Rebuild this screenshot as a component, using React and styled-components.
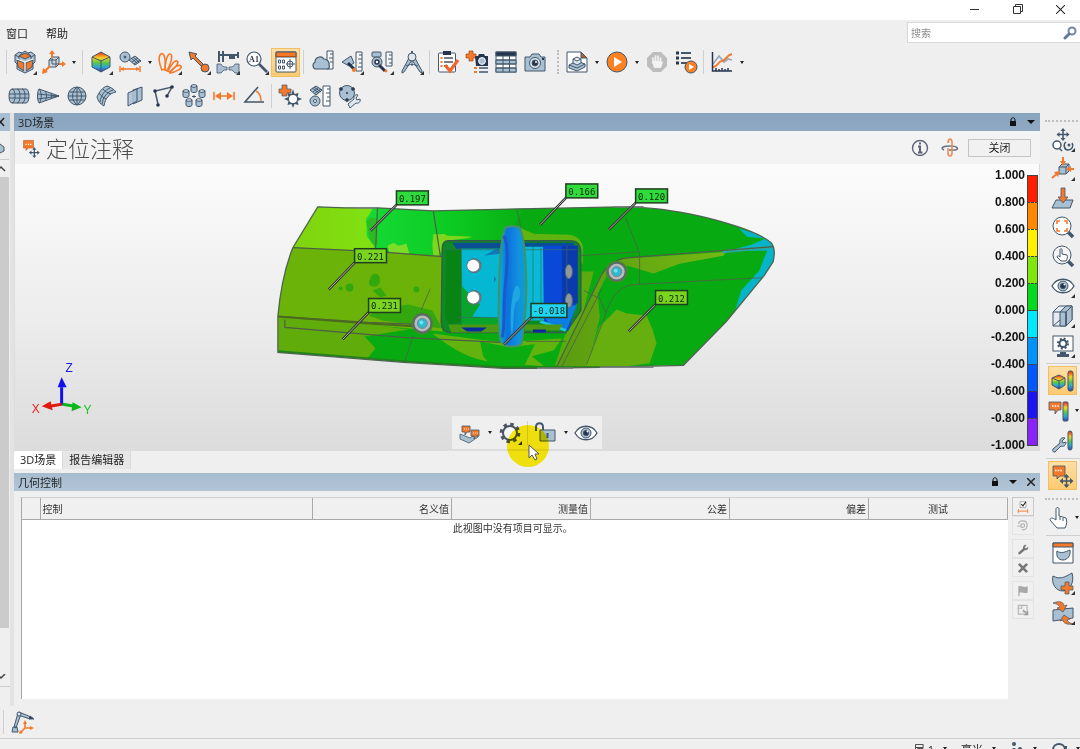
import React from 'react';
import styled, { createGlobalStyle, css } from 'styled-components';

const GlobalStyle = createGlobalStyle`
  * {
    box-sizing: border-box;
  }

  body {
    margin: 0;
    overflow: hidden;
    background: #efefef;
    color: #222;
    font-family: 'Open Sans', 'Noto Sans CJK SC', sans-serif;
    font-size: 11px;
  }

  button,
  input {
    font-family: inherit;
    font-size: inherit;
    color: inherit;
  }

  svg {
    display: block;
    flex: none;
  }
`;

const STEEL = '#a9bfd2';
const DARK = '#43576b';
const NAVY = '#26354f';
const ORANGE = '#f5792a';

/* ---------- icons, all on a 24 x 24 grid ---------- */

const Hue = ({ id }) => (
  <linearGradient id={id} x1="0" y1="0" x2="0" y2="1">
    <stop offset="0.05" stopColor="#f0401c" />
    <stop offset="0.3" stopColor="#f5d327" />
    <stop offset="0.55" stopColor="#55c552" />
    <stop offset="0.75" stopColor="#2fa8cf" />
    <stop offset="1" stopColor="#3440b8" />
  </linearGradient>
);

const icons = {
  cubes: (
    <g stroke={DARK} strokeLinejoin="round">
      <path d="M2 5l4-3 3 1 3-2 3 2 3-1 4 3v7l-2 2v5l-8 4-8-4v-5l-2-2z" fill={STEEL} />
      <path d="M2 5l4 2v5M22 5l-4 2v5M9 3l-3 4M15 3l3 4" fill="none" />
      <path d="M6 6l6-3 6 3-6 3z" fill={ORANGE} />
      <path d="M4 10l7 3v8l-6-4z M20 10l-7 3v8l6-4z" fill={ORANGE} />
      <path d="M4 9l8 3 8-3 M12 12v9" fill="none" stroke="#fff" />
    </g>
  ),
  axes: (
    <g fill="none" stroke={DARK}>
      <path d="M7 10h7v7H7z M10 7h7v7h-7z M7 10l3-3 M14 10l3-3 M14 17l3-3" fill={STEEL} fillOpacity="0.5" />
      <path d="M10 8V3 M17 14h5 M8 16l-5 5" stroke={ORANGE} strokeWidth="2" />
      <path d="M10 0l3 4H7z M24 14l-4 3v-6z M0 24l1-6 5 4z" fill={ORANGE} stroke="none" />
    </g>
  ),
  hueCube: (
    <g stroke={DARK} strokeLinejoin="round">
      <defs><Hue id="hueCube" /></defs>
      <path d="M12 2l9 5v10l-9 5-9-5V7z" fill="url(#hueCube)" />
      <path d="M3 7l9 4 9-4 M12 11v11" fill="none" />
    </g>
  ),
  measure: (
    <g stroke={DARK}>
      <circle cx="7" cy="7" r="5" fill={STEEL} />
      <circle cx="7" cy="7" r="1" fill={DARK} />
      <path d="M11 10l6-4 6 5-6 4z M13 8l6 5 M15 7l6 5 M14 12l6-4 M16 14l6-4" fill={STEEL} />
      <path d="M3 19h18 M2 16v6 M22 16v6" stroke={ORANGE} strokeWidth="1.4" />
      <path d="M2 19l4-2v4z M22 19l-4-2v4z" fill={ORANGE} stroke="none" />
    </g>
  ),
  petals: (
    <g fill="none" stroke={ORANGE} strokeWidth="1.6">
      <path d="M4 20C1 14 0 6 3 4s5 5 4 15z" />
      <path d="M7 20C7 13 9 4 12 4s2 8-3 17z" />
      <path d="M10 21c3-6 6-11 9-10s-2 7-7 11z" />
      <path d="M12 22c4-5 9-8 11-6s-5 6-11 7z" />
    </g>
  ),
  pointer: (
    <g>
      <path d="M2 2l2 8 2-2 10 10 2-2L8 6l2-2z" fill={ORANGE} stroke={DARK} />
      <circle cx="18" cy="18" r="4" fill={ORANGE} stroke={DARK} />
    </g>
  ),
  caliper: (
    <g>
      <path d="M2 1h2v11H2z M6 1h2v11H6z M2 4h20v2H2z M13 4h6v5h-6z M21 2h2v6h-2z" fill={DARK} />
      <path d="M1 14h4c1 3 4 3 6 3v3H8l-3 3H1z M23 14h-4c-1 3-4 3-6 3v3h3l3 3h4z" fill={STEEL} stroke={DARK} strokeWidth="0.8" />
    </g>
  ),
  zoomText: (
    <g>
      <circle cx="9" cy="9" r="7" fill="#fff" stroke={DARK} strokeWidth="1.2" />
      <text x="9" y="12" fontSize="8" fontWeight="bold" textAnchor="middle" fontFamily="Liberation Serif, serif" fill={NAVY}>A1</text>
      <path d="M14 14l8 8" stroke={DARK} strokeWidth="2.6" />
    </g>
  ),
  window: (
    <g>
      <rect x="2" y="2" width="20" height="20" rx="1" fill="#fff" stroke={DARK} />
      <path d="M2 2h20v5H2z" fill={ORANGE} stroke={DARK} />
      <path d="M2 6.5h20" stroke="#b84e12" />
      <g fill="none" stroke={DARK}>
        <path d="M4.5 10h2v3h-2z M8.5 10h2v3h-2z M4.5 16h2v3h-2z M8.5 16h2v3h-2z" />
        <circle cx="16" cy="14" r="3" />
        <path d="M16 9v10 M12 14h9" />
      </g>
    </g>
  ),
  cloud: (
    <g stroke={DARK}>
      <path d="M17 1h6v18h-6z" fill="#f7f7f7" />
      <path d="M23 4h-3 M23 8h-4 M23 12h-3" />
      <path d="M5 19a4 4 0 0 1 0-7 5 5 0 0 1 9-3 5 5 0 0 1 5 6c1 2 0 4-2 4z" fill={STEEL} strokeWidth="1.2" />
    </g>
  ),
  probe: (
    <g stroke={DARK}>
      <path d="M16 2h6v19h-6z" fill="#f7f7f7" />
      <path d="M22 5h-3 M22 9h-4 M22 13h-3 M22 17h-4" />
      <path d="M2 12l9-6 3 7-5 3z" fill={STEEL} />
      <path d="M8 13l6 6" stroke={NAVY} strokeWidth="3" />
      <circle cx="14" cy="20" r="2" fill={ORANGE} stroke="none" />
    </g>
  ),
  scanner: (
    <g stroke={DARK}>
      <path d="M16 2h6v14h-6z" fill="#f7f7f7" />
      <path d="M22 5h-3 M22 9h-4 M22 13h-3" />
      <rect x="2" y="2" width="9" height="5" rx="1" fill={STEEL} />
      <circle cx="7" cy="12" r="5" fill={STEEL} />
      <circle cx="7" cy="12" r="2" fill="#fff" stroke={NAVY} strokeWidth="1.5" />
      <path d="M9 15l6 6" stroke={NAVY} strokeWidth="3" />
      <circle cx="16" cy="21" r="1.4" fill={ORANGE} stroke="none" />
    </g>
  ),
  compass: (
    <g stroke={DARK} fill={STEEL}>
      <path d="M12 1v4" strokeWidth="2" />
      <path d="M9 8L2 21v2l2-1 8-12z M15 8l7 13v2l-2-1-8-12z" />
      <circle cx="12" cy="7" r="4" fill="#dfe6ec" />
      <path d="M6 16c4-2 8-2 12 0 M12 11v5" fill="none" />
    </g>
  ),
  clipboard: (
    <g>
      <rect x="2.5" y="3" width="17" height="19" rx="1" fill="#fff" stroke={DARK} />
      <path d="M7 1h8v4H7z" fill={NAVY} />
      <path d="M8 8h9 M8 12h9 M8 16h4" stroke={DARK} strokeWidth="1.3" />
      <path d="M4.5 8h2 M4.5 12h2 M4.5 16h2" stroke={ORANGE} strokeWidth="2" />
      <path d="M9 15l5 6 8-11" fill="none" stroke="#f0642c" strokeWidth="3.2" />
    </g>
  ),
  addShot: (
    <g>
      <path d="M4 1h4v3h3v4H8v3H4V8H1V4h3z" fill={ORANGE} stroke="#a14a17" strokeWidth="0.7" />
      <path d="M10 6h3l1-2h5l1 2h3v10H11z" fill={NAVY} />
      <circle cx="17" cy="11" r="3.4" fill={STEEL} stroke="#fff" />
      <path d="M9 18h3 M9 22h3" stroke={ORANGE} strokeWidth="2" />
      <path d="M14 18h9 M14 22h9" stroke={DARK} strokeWidth="1.4" />
    </g>
  ),
  grid: (
    <g stroke={DARK}>
      <rect x="2" y="2" width="20" height="20" fill="#fff" />
      <path d="M2 10h20v4H2z M2 18h20v4H2z" fill={STEEL} />
      <path d="M2 2h20v4H2z" fill={NAVY} />
      <path d="M9 6v16 M15.5 6v16 M2 10h20 M2 14h20 M2 18h20" fill="none" />
    </g>
  ),
  camera: (
    <g stroke={DARK}>
      <path d="M2 7h5l2-3h7l2 3h4v14H2z" fill={STEEL} strokeLinejoin="round" />
      <circle cx="12" cy="13" r="5.5" fill="#dfe7ee" />
      <circle cx="12" cy="13" r="3" fill={NAVY} />
      <circle cx="13" cy="12" r="1" fill="#fff" stroke="none" />
      <path d="M19 9h2" strokeWidth="2" stroke={NAVY} />
    </g>
  ),
  docPart: (
    <g stroke={DARK}>
      <path d="M2 2h14l6 6v14H2z" fill="#fff" />
      <path d="M16 2v6h6z" fill="#b55a2b" />
      <path d="M4 15l8-4 8 3v3l-8 4-8-3z" fill={STEEL} />
      <path d="M8 9l4-2 4 2v4l-4 2-4-2z M8 9l4 2 4-2" fill="#dfe7ee" />
      <path d="M4 15l8 3 8-4" fill="none" />
    </g>
  ),
  play: (
    <g>
      <circle cx="12" cy="12" r="10" fill="#fb8122" stroke={DARK} />
      <path d="M9 7l8 5-8 5z" fill="#fff" />
    </g>
  ),
  stop: (
    <g>
      <path d="M8 2h8l6 6v8l-6 6H8l-6-6V8z" fill="#bdbdbd" />
      <path d="M8 13V8 M10.5 11V6 M13 11V6 M15.5 12V8" stroke="#f2f2f2" strokeWidth="1.7" strokeLinecap="round" />
      <path d="M7 11h9l2 1-2 6H9z" fill="#f2f2f2" />
    </g>
  ),
  runList: (
    <g>
      <path d="M2 3h3 M2 8h3 M2 13h3" stroke={NAVY} strokeWidth="3" />
      <path d="M7 3h10 M7 8h10 M7 13h6" stroke={DARK} strokeWidth="2" />
      <circle cx="17" cy="17" r="6" fill="#fb8122" stroke={DARK} />
      <path d="M15 14l5 3-5 3z" fill="#fff" />
    </g>
  ),
  chart: (
    <g fill="none">
      <path d="M3 14l6-8 5 6 4-3 4 1" stroke="#94a9bb" strokeWidth="1.7" />
      <path d="M3 17c5 0 5-6 9-6s4-6 10-7" stroke={ORANGE} strokeWidth="2" />
      <path d="M2.5 2v19H22 M6 21v-3 M9 21v-2 M12 21v-3 M15 21v-2 M18 21v-3" stroke={NAVY} strokeWidth="1.5" />
    </g>
  ),
  cylinder: (
    <g stroke={DARK} fill={STEEL}>
      <path d="M5 5h14c4 0 4 14 0 14H5C1 19 1 5 5 5z" />
      <path d="M5 5c4 0 4 14 0 14 M10 5c4 0 4 14 0 14 M15 5c4 0 4 14 0 14 M2 10h20 M2 14h20" fill="none" />
    </g>
  ),
  cone: (
    <g stroke={DARK} fill={STEEL}>
      <path d="M3 5l20 7-20 7c-2-3-2-11 0-14z" />
      <path d="M3 5c3 3 3 11 0 14 M9 7c2 3 2 7 0 10 M15 9c1 2 1 4 0 6 M2 10l21 2 M2 15l21-3" fill="none" />
    </g>
  ),
  sphere: (
    <g stroke={DARK} fill="none">
      <circle cx="12" cy="12" r="9" fill={STEEL} />
      <path d="M12 3v18 M12 3c-6 5-6 13 0 18 M12 3c6 5 6 13 0 18 M4 8h16 M3 12h18 M4 16h16" />
    </g>
  ),
  surface: (
    <g stroke={DARK} fill="none">
      <path d="M3 13C5 8 9 3 13 2c3 1 7 3 9 6-6 1-11 6-12 14-4-2-6-5-7-9z" fill={STEEL} />
      <path d="M5 9c2 3 5 5 7 6 M9 5c2 3 5 4 8 5 M6 18c1-7 5-12 10-14 M8 20c1-7 5-12 11-14" />
    </g>
  ),
  planes: (
    <g stroke={DARK} fill={STEEL}>
      <path d="M10 6l9-3v13l-9 4z" />
      <path d="M5 9l9-4v12l-9 5z" fillOpacity="0.85" />
    </g>
  ),
  polyline: (
    <g>
      <path d="M6 20L3 7l17-4-5 9" fill="none" stroke={DARK} strokeWidth="1.5" />
      <g fill={NAVY}>
        <circle cx="6" cy="21" r="1.8" /><circle cx="3" cy="7" r="1.8" />
        <circle cx="20" cy="3" r="1.8" /><circle cx="15" cy="12" r="1.8" />
      </g>
    </g>
  ),
  cylinders: (
    <g stroke={DARK} fill={STEEL}>
      {[[9, 1], [1, 6], [17, 6], [4, 15], [14, 15]].map(([x, y]) => (
        <g key={x}>
          <path d={`M${x} ${y + 1}h6v5c0 2-6 2-6 0z`} />
          <ellipse cx={x + 3} cy={y + 1} rx="3" ry="1.3" fill="#dfe7ee" />
        </g>
      ))}
      <path d="M12 11v3 M10 12.5h4" />
    </g>
  ),
  distance: (
    <g>
      <path d="M4 12h16 M2 8v8 M22 8v8" stroke={ORANGE} strokeWidth="1.6" />
      <path d="M3 12l6-4v8z M21 12l-6-4v8z" fill={ORANGE} />
    </g>
  ),
  angle: (
    <g fill="none">
      <path d="M16 3L3 18h19" stroke={DARK} strokeWidth="1.6" />
      <path d="M14 7c4 2 5 6 5 10" stroke={ORANGE} strokeWidth="1.5" />
    </g>
  ),
  addPoint: (
    <g>
      <path d="M15 5l1.5 5 4-1-1 4 4.500 2-4.500 2 1 4-4-1-1.500 4-1.500-4-4 1 1-4-4.500-2 4.500-2-1-4 4 1z" fill={DARK} />
      <circle cx="15" cy="15" r="4" fill="#fff" />
      <path d="M4 1h5v4h4v4H9v3H4V9H1V5h3z" fill={ORANGE} stroke={DARK} strokeWidth="0.7" />
    </g>
  ),
  meshRuler: (
    <g stroke={DARK} fill={STEEL}>
      <path d="M15 2h7v20h-7z" fill="#fff" />
      <path d="M22 5h-3 M22 9h-4 M22 13h-3 M22 17h-4" />
      <path d="M2 6l6-4 6 4-6 5z M4 4l7 5 M6 3l7 5 M5 8l6-5 M6 10l7-5" />
      <circle cx="7" cy="17" r="5" />
      <circle cx="7" cy="17" r="1.5" fill="#fff" />
    </g>
  ),
  wrenchCircle: (
    <g stroke={DARK}>
      <circle cx="9" cy="9" r="7.5" fill={STEEL} />
      <g fill={NAVY}><circle cx="3" cy="5" r="1.5" /><circle cx="15" cy="5" r="1.5" /><circle cx="9" cy="16" r="1.5" /><circle cx="9" cy="9" r="0.8" /></g>
      <path d="M10 20l6-5c-1-3 2-5 4-4l-2 3 1 2 3-1c1 3-2 5-4 4l-6 5z" fill="#dfe7ee" />
    </g>
  ),
  note: (
    <g>
      <path d="M3 3h12v9H9l-3 3v-3H3z" fill={ORANGE} stroke="#b35c2b" strokeWidth="0.7" />
      <path d="M5.5 7.5h7" stroke="#fff" strokeWidth="1.5" strokeDasharray="1.5 1.2" />
      <path d="M16 13v9 M11 17.5h10" stroke={DARK} strokeWidth="1.5" />
      <path d="M16 11l2.5 3h-5z M16 24l2.5-3h-5z M9.5 17.5l3-2.5v5z M22.5 17.5l-3-2.5v5z" fill={DARK} />
    </g>
  ),
  info: (
    <g fill="none" stroke="#5d6577" strokeWidth="1.4">
      <circle cx="12" cy="12" r="7.5" />
      <path d="M10 10.5h2v6 M10 16.5h4.5 M11 7.5h2" strokeWidth="2" />
    </g>
  ),
  orbit: (
    <g fill="none" strokeWidth="1.6">
      <path d="M6 14c-4-2-1-4 6-4s10 3 5 4h-6" stroke="#6b7484" />
      <path d="M10 7c0-5 4-5 4-1v11c0 4-4 4-4 0v-5" stroke="#f08a58" />
    </g>
  ),
  viewModes: (
    <g fill="none" stroke={DARK} strokeWidth="1.5">
      <path d="M12 2v9 M7 6.5h10" />
      <path d="M12 0l2.5 3h-5z M12 13l2.5-3h-5z M5.5 6.5l3-2.5v5z M18.5 6.5l-3-2.5v5z" fill={DARK} stroke="none" />
      <circle cx="6" cy="17" r="4" fill="#fff" />
      <path d="M8 20l3 3 M15 14c-3 2-2 8 2 8s6-4 4-7" />
      <circle cx="18" cy="17" r="1.5" fill={DARK} stroke="none" />
    </g>
  ),
  alignBox: (
    <g stroke={DARK}>
      <path d="M8 10l3-3h7v7l-3 3H8z M8 10h7v7 M15 10l3-3" fill={STEEL} />
      <path d="M12 0v6 M23 12h-5 M1 21l6-5" stroke={ORANGE} strokeWidth="2" />
      <path d="M12 9L9 4h6z M15 12l5-3v6z M9 14l-2 6-4-5z" fill={ORANGE} stroke="none" />
    </g>
  ),
  project: (
    <g stroke={DARK}>
      <path d="M5 14h17l-3 8H1z" fill={STEEL} />
      <path d="M10 2h4v9h3l-5 6-5-6h3z" fill={ORANGE} strokeWidth="0.8" />
    </g>
  ),
  zoomFit: (
    <g fill="none">
      <path d="M17 17l5 5" stroke={DARK} strokeWidth="3.5" />
      <circle cx="11" cy="11" r="9" fill="#fff" stroke={DARK} />
      <path d="M6 9V6h3 M13 6h3v3 M16 13v3h-3 M9 16H6v-3" stroke={ORANGE} strokeWidth="1.6" />
    </g>
  ),
  zoomHand: (
    <g>
      <path d="M17 17l5 5" stroke={DARK} strokeWidth="3.5" />
      <circle cx="11" cy="11" r="9" fill="#f4f4f4" stroke={DARK} />
      <path d="M9 13V5.5c0-1 2-1 2 0V10l5 1c1 2 0 4-1 6h-5l-4-4c0-1 1-2 3 0z" fill="#fff" stroke={DARK} />
    </g>
  ),
  eye: (
    <g stroke={DARK}>
      <path d="M1 12c5-9 17-9 22 0-5 9-17 9-22 0z" fill="#fff" strokeWidth="1.3" />
      <circle cx="12" cy="12" r="5" fill={STEEL} />
      <circle cx="12" cy="12" r="2.6" fill={NAVY} />
      <circle cx="13.5" cy="10.5" r="1" fill="#fff" stroke="none" />
    </g>
  ),
  wireBox: (
    <g stroke={DARK}>
      <path d="M2 8l6-6h13v14l-6 6H2z" fill="#e4eaf0" />
      <path d="M15 8l6-6v14l-6 6z M9 8l6-6h6l-6 6v14H9z" fill={STEEL} />
      <path d="M2 8h13v14 M2 22l7-6" fill="none" />
    </g>
  ),
  monitor: (
    <g>
      <rect x="2" y="2" width="20" height="15" fill="#fff" stroke={DARK} />
      <path d="M9 18h6v2h3v3H6v-3h3z" fill={DARK} />
      <circle cx="12" cy="9.5" r="3.5" fill="none" stroke={DARK} strokeWidth="2" />
      <circle cx="12" cy="9.5" r="5" fill="none" stroke={DARK} strokeWidth="2" strokeDasharray="2 1.93" />
    </g>
  ),
  cubeBar: (
    <g stroke={DARK}>
      <defs><Hue id="cubeBar" /></defs>
      <path d="M8 6l6 3v7l-6 4-7-4V9z" fill="url(#cubeBar)" />
      <path d="M1 9l7 3 6-3 M8 12v8" fill="none" />
      <rect x="17" y="2" width="5" height="20" rx="2" fill="url(#cubeBar)" />
    </g>
  ),
  noteBar: (
    <g stroke={DARK}>
      <defs><Hue id="noteBar" /></defs>
      <path d="M-2 3h12v8H7l-3 4v-4h-6z" fill={ORANGE} strokeWidth="0.8" />
      <path d="M1 7h7" stroke="#fff" strokeWidth="1.5" strokeDasharray="1.5 1.2" />
      <rect x="12" y="3" width="5" height="19" rx="1" fill="url(#noteBar)" />
    </g>
  ),
  wrenchBar: (
    <g stroke={DARK}>
      <defs><Hue id="wrenchBar" /></defs>
      <path d="M2 20l7-6c-1-4 2-6 5-5l-3 3 1 2 3-1c0 4-3 5-5 4l-6 6c-2 0-3-1-2-3z" fill={STEEL} />
      <rect x="17" y="2" width="4" height="19" rx="2" fill="url(#wrenchBar)" />
    </g>
  ),
  noteMove: (
    <g>
      <path d="M2 2h12v10H9l-3 3v-3H2z" fill={ORANGE} stroke={DARK} strokeWidth="0.8" />
      <path d="M4 6.5h8" stroke="#fff" strokeWidth="1.5" strokeDasharray="1.5 1.2" />
      <path d="M15.5 13v8 M11 17h9" stroke={DARK} strokeWidth="1.5" />
      <path d="M15.5 10l3 3.5h-6z M15.5 24l3-3.5h-6z M8.5 17l3.5-3v6z M22.5 17l-3.5-3v6z" fill={DARK} />
    </g>
  ),
  hand: (
    <path d="M7 14V3c0-2 3-2 3 0v7l7 2c1 2 1 7-1 10H8l-7-8c0-2 2-3 6 0z M11 11v3 M14 12v3" transform="translate(-2)" fill="#fff" stroke={DARK} />
  ),
  windowShape: (
    <g stroke={DARK}>
      <path d="M2 2h20v20H2z" fill="#fff" />
      <path d="M2 2h20v4H2z" fill={ORANGE} />
      <path d="M6 10c4 3 8 1 13-1 1 6-3 10-7 10-5 0-7-4-6-9z" fill={STEEL} />
    </g>
  ),
  addShape: (
    <g stroke={DARK}>
      <path d="M2 5c7 4 12 1 19-3 3 10-3 18-9 18C5 20 0 13 2 5z" fill={STEEL} />
      <path d="M14 11h4v4h4v4h-4v4h-4v-4h-4v-4h4z" fill={ORANGE} strokeWidth="0.7" />
    </g>
  ),
  flip: (
    <g stroke={DARK}>
      <path d="M2 9l20-2v10L2 20z" fill={STEEL} />
      <path d="M2 2c8-3 11 0 11 3l3-1-4 7-6-4 3-1c-1-2-3-3-7-4z M22 23c-6 1-10-1-10-4l-3 1 4-6 6 4-3 1c1 2 3 3 6 4z" fill={ORANGE} strokeWidth="0.7" />
    </g>
  ),
  noteTray: (
    <g stroke={DARK} strokeWidth="0.8">
      <path d="M2 13l10 4 8-5v4l-9 6-9-4z" fill={STEEL} />
      <path d="M4 5h8v6H9l-2 3v-3H4z M13 9h8v6h-3l-2 3v-3h-3z" fill={ORANGE} />
      <path d="M6 8h5 M15 12h5" stroke="#fff" strokeDasharray="1 1" />
    </g>
  ),
  gear: (
    <g fill="none" stroke="#4a5665">
      <circle cx="12" cy="12" r="7" strokeWidth="2" fill="#fff" fillOpacity="0.5" />
      <circle cx="12" cy="12" r="8.8" strokeWidth="3" strokeDasharray="3.456 3.456" />
    </g>
  ),
  unlock: (
    <g stroke={DARK}>
      <path d="M2 10V6c0-5 7-5 7 0v4" fill="none" strokeWidth="2" />
      <path d="M6 9h15v11H6z" fill={STEEL} />
      <path d="M13.5 12v5" strokeWidth="2" />
    </g>
  ),
  robot: (
    <g stroke={DARK}>
      <path d="M2 22l1-5h4l1 5z M4 17L8 3l3 1-5 14z" fill={STEEL} />
      <path d="M9 2l12 5-1 2-12-4z" fill={STEEL} />
      <circle cx="9" cy="4" r="2" fill="#dfe7ee" />
      <path d="M20 6l4 3h-5z" fill={NAVY} />
      <path d="M15 18v-6 M15 18h6 M15 18l-5 5" stroke={ORANGE} strokeWidth="1.6" />
      <path d="M15 10l2 4h-4z M24 18l-4 2v-4z M9 24l1-4 3 3z" fill={ORANGE} stroke="none" />
    </g>
  ),
  checkRange: (
    <g fill="none">
      <path d="M7 3h10v10H7z" fill="#fff" stroke="#777" />
      <path d="M9 7l3 3 5-7" stroke="#222" strokeWidth="2" />
      <path d="M4 19h16 M4 16v6 M20 16v6" stroke={ORANGE} strokeWidth="1.6" />
    </g>
  ),
  target: (
    <g fill="none" stroke="#b3b3b3" strokeWidth="2">
      <path d="M4 8c3-7 14-6 15 1s-4 11-9 9 M8 11c1-4 7-3 7 0s-5 5-7 2 M2 12h8" />
    </g>
  ),
  wrench: (
    <path d="M4 18l8-7c-1-4 3-7 6-6l-3 4 2 2 4-3c1 4-3 7-6 6l-8 7c-2 1-4-1-3-3z" fill="#777" />
  ),
  cross: (
    <path d="M5 5l14 14 M19 5L5 19" stroke="#777" strokeWidth="4.5" />
  ),
  flag: (
    <path d="M4 4c6-2 9 3 16 0v11c-7 2-9-2-14 0v6H4z" fill="#a8a8a8" />
  ),
  export: (
    <g fill="none" stroke="#b5b5b5" strokeWidth="2">
      <path d="M4 4h15v15H4z M4 9h6V4 M11 15h8" />
      <path d="M12 12l8 8 M20 14v6h-6" stroke="#999" />
    </g>
  ),
};

const Icon = ({ name, size = 24 }) => (
  <svg width={size} height={size} viewBox="0 0 24 24" overflow="visible" aria-hidden="true">
    {icons[name]}
  </svg>
);

/* ---------- shell ---------- */

const Shell = styled.div`
  display: flex;
  flex-direction: column;
  height: 100vh;
`;

const TitleBar = styled.header`
  display: flex;
  justify-content: flex-end;
  height: 20px;
  background: #fff;
`;

const WindowButton = styled.button`
  display: grid;
  place-items: center;
  width: 43px;
  padding: 0 0 2px 4px;
  border: 0;
  background: none;
`;

const MenuBar = styled.nav`
  display: flex;
  align-items: center;
  height: 25px;
  padding-left: 6px;
  gap: 18px;
`;

const MenuButton = styled.button`
  padding: 0;
  border: 0;
  background: none;
`;

const Search = styled.label`
  display: flex;
  align-items: center;
  width: 173px;
  height: 21px;
  margin-left: auto;
  padding: 0 3px;
  border: 1px solid #d9d9d9;
  border-right: 0;
  background: #fff;
`;

const SearchInput = styled.input`
  flex: 1;
  min-width: 0;
  padding: 0;
  border: 0;
  outline: 0;
  background: none;
  font-size: 10px;

  &::placeholder {
    color: #8c8c8c;
  }
`;

const ToolRow = styled.div`
  display: flex;
  align-items: center;
  height: 34px;
  padding-left: ${(p) => p.$indent}px;
`;

const Group = styled.div`
  display: flex;
  flex-direction: ${(p) => (p.$vertical ? 'column' : 'row')};
  gap: ${(p) => (p.$loose ? 1 : 0)}px;
`;

const Tool = styled.button`
  position: relative;
  display: grid;
  place-items: center;
  width: 29px;
  height: 29px;
  padding: 0;
  border: 1px solid transparent;
  background: none;

  ${(p) =>
    p.$active &&
    css`
      border-color: #f3bd62;
      background: linear-gradient(#fde0a6, #fdca70);
    `}

  ${(p) =>
    p.$more &&
    css`
      &::after {
        content: '';
        position: absolute;
        right: 1px;
        bottom: 1px;
        border: 2px solid #333;
        border-top-color: transparent;
        border-left-color: transparent;
      }
    `}
`;

const Caret = styled.button`
  display: grid;
  place-items: center;
  width: 11px;
  padding: 0;
  border: 0;
  background: none;

  &::before {
    content: '';
    border: 2px solid transparent;
    border-top: 3px solid #222;
    border-bottom: 0;
  }
`;

const SideCaret = styled(Caret)`
  position: absolute;
  right: -5px;
  height: 29px;
`;

const Split = styled.div`
  position: relative;
  display: flex;
`;

const Divider = styled.div`
  width: 7px;
  height: 24px;
  background: linear-gradient(#cfcfcf, #cfcfcf) center / 1px 100% no-repeat;
`;

const DottedDivider = styled.div`
  width: 3px;
  height: 24px;
  margin: 0 2px 0 8px;
  border-left: 2px dotted #bdbdbd;
`;

/* ---------- work area ---------- */

const Main = styled.main`
  display: flex;
  flex: 1;
  min-height: 0;
`;

const LeftPane = styled.aside`
  display: flex;
  flex-direction: column;
  align-items: flex-start;
  width: 10px;
  overflow: hidden;
`;

const LeftTitle = styled.div`
  width: 10px;
  height: 18px;
  background: #a9bdd0;
  overflow: hidden;
`;

const LeftBody = styled.div`
  display: flex;
  flex: 1;
  flex-direction: column;
  justify-content: space-between;
  width: 10px;
  margin-bottom: 19px;
  border-bottom: 1px solid #cdcdcd;
`;

const ScrollTrack = styled.div`
  flex: 1;
  padding: 0 1px 46px 0;
`;

const ScrollThumb = styled.div`
  height: 100%;
  background: #cbcbcb;
`;

const Gutter = styled.div`
  width: 4px;
  background: #e3e3e3;
`;

const Centre = styled.div`
  display: flex;
  flex: 1;
  flex-direction: column;
  min-width: 0;
`;

const PaneTitle = styled.div`
  display: flex;
  align-items: center;
  flex: none;
  height: 18px;
  padding: 0 4px;
  background: ${(p) => (p.$active ? 'linear-gradient(#89a4bf, #8fa9c3)' : 'linear-gradient(#a7bbcf, #b3c6d8)')};
`;

const PaneActions = styled.div`
  display: flex;
  gap: 4px;
  margin-left: auto;
  margin-right: -2px;
`;

const PaneAction = styled.button`
  display: grid;
  place-items: center;
  width: 14px;
  height: 16px;
  padding: 0;
  border: 0;
  background: none;
`;

const Scene = styled.section`
  display: flex;
  flex: 1;
  flex-direction: column;
  min-height: 0;
`;

const SceneHeader = styled.div`
  display: flex;
  align-items: center;
  height: 33px;
  padding: 0 9px 0 6px;
  border-left: 1px solid #dcdcdc;
  background: #f3f3f3;
`;

const SceneTitle = styled.h1`
  margin: 0 auto 0 5px;
  color: #4c4c4c;
  font-size: 22px;
  font-weight: 300;
  line-height: 30px;
`;

const IconButton = styled.button`
  display: grid;
  place-items: center;
  width: 30px;
  padding: 0;
  border: 0;
  background: none;
`;

const CloseButton = styled.button`
  width: 63px;
  height: 18px;
  margin-left: 3px;
  padding: 0;
  border: 1px solid #c4c4c4;
  background: #f1f1f1;
  line-height: 14px;
`;

const Viewport = styled.div`
  position: relative;
  display: flex;
  flex: 1;
  justify-content: flex-end;
  min-height: 0;
  border: 1px solid #dcdcdc;
  border-top: 0;
  background: linear-gradient(#fcfcfc, #ececec 55%, #dcdcdc);
`;

const ModelSvg = styled.svg`
  position: absolute;
  inset: 0;
  width: 100%;
  height: 100%;
`;

const Legend = styled.ol`
  margin: 11px 1px 0 0;
  padding: 0;
  list-style: none;
`;

const LegendStep = styled.li`
  display: flex;
  align-items: flex-start;
  justify-content: flex-end;
  gap: 2px;
  height: 27px;
  color: #111;
  font: bold 12px/14px 'Liberation Sans', sans-serif;
`;

const LegendLabel = styled.span`
  margin-top: -7px;
`;

const LegendSwatch = styled.span`
  width: 11px;
  height: 27px;
  border: 1px solid #444;
  border-width: 1px 1px 0;
  border-top-style: ${(p) => (p.$dashed ? 'dashed' : 'solid')};
  background: ${(p) => p.$color};
`;

const FloatBar = styled.div`
  position: absolute;
  bottom: 1px;
  left: calc(50% - 75px);
  display: flex;
  align-items: center;
  width: 150px;
  height: 33px;
  padding-left: 3px;
  background: rgba(245, 245, 245, 0.7);
`;

const Spotlight = styled.div`
  position: absolute;
  bottom: -17px;
  left: calc(50% - 20px);
  width: 42px;
  height: 42px;
  border-radius: 50%;
  background: #ffee10;
  mix-blend-mode: multiply;
  pointer-events: none;
  z-index: 1;
`;

const Cursor = styled.svg`
  position: absolute;
  bottom: -11px;
  left: 50%;
  z-index: 2;
`;

const Tabs = styled.div`
  display: flex;
  height: 22px;
  padding-bottom: 4px;
`;

const Tab = styled.button`
  padding: 0 6px;
  border: 0;
  border-right: 1px solid #dadada;
  background: ${(p) => (p.$active ? '#fff' : '#e6e6e6')};
  line-height: 16px;
`;

const Dock = styled.section`
  display: flex;
  flex: 0 0 233px;
  flex-direction: column;
`;

const DockBody = styled.div`
  display: flex;
  flex: 1;
  gap: 4px;
  padding: 6px 6px 7px 7px;
`;

const TablePane = styled.div`
  flex: 1;
  border-top: 1px solid #d0d0d0;
  border-left: 1px solid #a8a8a8;
  background: #fff;
`;

const DataTable = styled.table`
  width: 100%;
  border-collapse: collapse;
  table-layout: fixed;
  color: #333;
  font-size: 10px;
`;

const HeadCell = styled.th`
  width: ${(p) => p.$width || 'auto'};
  height: 21px;
  padding: 0 2px;
  border-right: 1px solid #a9a9a9;
  border-bottom: 1px solid #a9a9a9;
  background: #f0f0f0;
  font-weight: 400;
  text-align: ${(p) => p.$align || 'right'};
`;

const EmptyCell = styled.td`
  height: 18px;
  padding: 0 4px 0 0;
  text-align: center;
  line-height: 14px;
`;

const DockTools = styled.div`
  display: flex;
  flex-direction: column;
  gap: 4px;
`;

const DockPair = styled.div`
  display: flex;
  flex-direction: column;
`;

const DockTool = styled.button`
  display: grid;
  place-items: center;
  width: 22px;
  height: 19px;
  padding: 0;
  border: 1px solid ${(p) => (p.disabled ? '#e3e3e3' : '#c9c9c9')};
  background: #f0f0f0;
`;

const SideBar = styled.aside`
  width: 40px;
  padding: 7px 3px 0 8px;
`;

const SideDots = styled.div`
  height: 5px;
  margin: ${(p) => (p.$gap ? '8px -5px 0 -3px' : '0 -5px 0 -3px')};
  border-top: 2px dotted #bdbdbd;
`;

const SideDivider = styled.div`
  height: 6px;
  margin: 0 -3px 0 -2px;
  background: linear-gradient(#cfcfcf, #cfcfcf) center / 100% 1px no-repeat;
`;

const FootBar = styled.div`
  display: flex;
  align-items: center;
  height: 33px;
  border-bottom: 1px solid #cfcfcf;
`;

const StatusBar = styled.footer`
  display: flex;
  align-items: flex-start;
  justify-content: flex-end;
  gap: 14px;
  height: 10px;
  padding: 3px 0 0;
  overflow: hidden;
  line-height: 15px;
`;

const StatusItem = styled.button`
  display: flex;
  align-items: center;
  gap: 9px;
  padding: 0;
  border: 0;
  background: none;
  line-height: 15px;

  &::after {
    content: '';
    border: 2px solid transparent;
    border-top: 3px solid #222;
  }
`;

/* ---------- scene content ---------- */

const callouts = [
  { text: '0.197', x: 396, y: 191, toX: 370, toY: 231, fill: '#2fdc3c' },
  { text: '0.166', x: 566, y: 184, toX: 540, toY: 225, fill: '#2fdc3c' },
  { text: '0.120', x: 636, y: 189, toX: 609, toY: 230, fill: '#2fdc3c' },
  { text: '0.221', x: 354, y: 249, toX: 328, toY: 290, fill: '#7bd420' },
  { text: '0.231', x: 368, y: 299, toX: 342, toY: 340, fill: '#7bd420' },
  { text: '0.212', x: 656, y: 291, toX: 629, toY: 332, fill: '#7bd420' },
  { text: '-0.018', x: 531, y: 304, toX: 504, toY: 345, fill: '#1fd4f2' },
];

const Callout = ({ text, x, y, toX, toY, fill }) => {
  const width = text.length > 5 ? 36 : 32;
  return (
    <g>
      <path d={`M${x} ${y + 14}L${toX} ${toY}`} stroke="#333" strokeWidth="2.6" />
      <path d={`M${x} ${y + 14}L${toX} ${toY}`} stroke="#a9b3a0" />
      <rect x={x} y={y} width={width} height="14" fill={fill} stroke="#1f3d1f" strokeWidth="1.5" />
      <text
        x={x + width / 2}
        y={y + 11}
        fontSize="9"
        textAnchor="middle"
        fontFamily="DejaVu Sans Mono, monospace"
        fill="#0d260d"
      >
        {text}
      </text>
    </g>
  );
};

const Screw = ({ x, y }) => (
  <g>
    <circle cx={x} cy={y} r="11" fill="#478d2b" />
    <circle cx={x} cy={y} r="9" fill="#b4bcc0" stroke="#5b6a62" strokeWidth="2" />
    <circle cx={x} cy={y} r="5" fill="#2fb9cf" stroke="#7b858a" />
    <circle cx={x - 1} cy={y - 1} r="2" fill="#6fe4f2" />
  </g>
);

const HULL =
  'M317 207L345 208 377 208 433 211 520 209 620 207 C650 207 668 210 690 214 C720 220 760 232 772 243 Q777 249 774 262 L765 276 727 322 684 366 600 368 537 369 503 369 403 363 277 353V317C279 295 284 268 292 248Z';

const Model = () => (
  <ModelSvg viewBox="14 164 1026 287" role="img" aria-label="偏差色图">
    <defs>
      <clipPath id="hull"><path d={HULL} /></clipPath>
      <linearGradient id="topStrip">
        <stop offset="0" stopColor="#80cf0c" />
        <stop offset="1" stopColor="#80e312" />
      </linearGradient>
      <linearGradient id="midStrip">
        <stop offset="0" stopColor="#16d936" />
        <stop offset="0.5" stopColor="#0ccc22" />
        <stop offset="1" stopColor="#08ac12" />
      </linearGradient>
      <linearGradient id="strap">
        <stop offset="0" stopColor="#00b8d8" />
        <stop offset="0.3" stopColor="#0a72dc" />
        <stop offset="0.7" stopColor="#128ee0" />
        <stop offset="1" stopColor="#08a5c4" />
      </linearGradient>
      <linearGradient id="channel">
        <stop offset="0" stopColor="#5a9c10" />
        <stop offset="1" stopColor="#74b814" />
      </linearGradient>
    </defs>

    <g clipPath="url(#hull)">
      <path d={HULL} fill="#08aa12" />
      <path d="M270 200H377V253L270 246z" fill="url(#topStrip)" />
      <path d="M377 200H530L505 240 441 256 375 251C371 238 365 240 366 232c1-8-3-12 2-16z" fill="url(#midStrip)" />
      <path d="M366 222c4-6 8-4 11-3v26c-4 2-6-2-8-6z" fill="#2bbb22" />
      <path d="M387 246l6-3 5 3 8-2 3 10-20-1z" fill="#7cdc28" />
      <path d="M433 234c8 2 10-2 14 2l26 1c-12 3-24 2-28 7l-6 12h-6l-1-10z" fill="#7fd61e" />

      <path d="M270 247l107 5 65 4v76l-166-15z" fill="#6bb309" />
      <g fill="#33a80e">
        <path d="M370 278c2-5 8-5 9 0 2 6-2 10-7 9s-4-5-2-9z M372 291l8-3 6 8-6 2z" />
        <circle cx="349" cy="288" r="4" /><circle cx="340" cy="289" r="2" /><circle cx="416" cy="290" r="3" />
        <path d="M388 304l8 3 12-2 24 6 10 18-60-8-14-5 8-6z" />
      </g>
      <path d="M276 317l72 5 60 8-44 7 11 12-8 10-90-5z" fill="#60ac0b" />
      <path d="M432 334l70 9 60-4-8 12-22 6 12 10-50-4c-24-3-40-12-62-29z" fill="#62b30e" />
      <path d="M480 342l30 6 25-3-12 24-30 0-10-12z" fill="#0aac10" />

      <path d="M520 228l14 6 36 1c10 2 14 9 13 16v14l-12-20-74-2z" fill="#5fb40f" />
      <path d="M565 336l14-24 3-40 12 0-9 34-14 60-16 0z" fill="#5bab0e" />
      <path d="M557 368l40-84c4-12 14-22 28-25l102-7-3 4-44 8-26 10-26-8-20 8-10 20 2 24-12 50z" fill="url(#channel)" />
      <path d="M600 327l17-17 10 4 20 2 6 14 4 14-7 20-30 4-34 0z" fill="#67ae0f" />
      <path d="M740 229l28 8 12 14-8 24-34 46-4-4 8-26 18-20 8-20-38 0 22-6 14-6-18-2z" fill="#05b4c8" />
      <path d="M723 252l52-5" stroke="#2ba8a4" strokeWidth="3" />

      <path d="M448 241h122q11 0 11 12v58l-15 22H452q-12 0-11-12l1-72q0-8 6-8z" fill="#0d8a22" stroke="#355c4a" strokeWidth="1.5" />
      <path d="M446 250h15v72l-12 3-4-8z" fill="#078414" />
      <path d="M452 243h122v6H456z" fill="#0b4e92" />
      <path d="M461 249h41v79h-41z" fill="#0aa42c" />
      <path d="M461 249h41v70l-30-2 8-12-18-18z" fill="#05b7d0" />
      <path d="M484 256l14-8 3 6-10 1z M494 276l2 4-2 3z" fill="#0f78b8" />
      <path d="M525 247h21v74h-21z" fill="#08bad6" />
      <path d="M543 246h34v55l-8 30-25-9z" fill="#0a48d8" />
      <path d="M562 246h16v58h-16z" fill="#0b3aae" />
      <path d="M545 318l20-12 12 0-11 26-16-6z" fill="#0c7ee2" />
      <path d="M540 322l26 9" stroke="#1cc6d8" strokeWidth="3" />
      <path d="M448 325h51v8h-48z M525 325h38l-4 6h-34z" fill="#4c9a14" />
      <path d="M461 328h26l-6 4h-14z M533 330h13v3h-13z" fill="#0a2a9a" />
      <g fill="none" stroke="#386a68" strokeWidth="0.7">
        <path d="M461 249v76 M446 250h131 M457 318h44 M541 248v74 M567 246v70 M533 247v74" />
      </g>
      <g stroke="#5b6d78">
        <circle cx="474" cy="266" r="7" fill="#77838a" /><circle cx="473" cy="266" r="6" fill="#fff" stroke="none" />
        <circle cx="474" cy="298" r="7" fill="#77838a" /><circle cx="473" cy="298" r="6" fill="#fff" stroke="none" />
        <ellipse cx="569" cy="272" rx="3.5" ry="7" fill="#8d999c" /><ellipse cx="569" cy="301" rx="3.5" ry="7" fill="#8d999c" />
      </g>
      <path d="M501 294v9l-2-4z" fill="#fff" />

      <path d="M505 228c5-2 11-2 15 0 6 14 8 60 5 88l-3 27c-2 5-16 6-21 0-4-8-3-100 4-115z" fill="url(#strap)" stroke="#43906a" strokeWidth="2" />
      <path d="M504 236c5 12 3 30 1 52s0 40-3 50" fill="none" stroke="#1f55cf" strokeWidth="3" />
      <path d="M516 286c6 0 5 14 1 16s-3 26-5 34c-3-10-1-44 4-50z" fill="#1fa7e4" />

      <g fill="none" stroke="#4f5f45" strokeWidth="0.8">
        <path d="M292 248l85 4 65 5 M277 317l90 6 52 2 M284 320v8l118 10 98 5 M377 208l-2 43 M433 211l7 45" strokeWidth="1.2" />
        <path d="M517 210l4 18 M413 336l-9 27 M430 289l-9 21 M566 342h-40" />
        <path d="M557 367l42-86c6-14 16-22 30-23l145-11" strokeWidth="1.2" />
        <path d="M562 367l40-78 M587 365l18-48c6-18 12-29 28-32l131-7 M626 218l14 36v31 M581 256l58-4 M584 291l16 8 6 14" />
      </g>
      <path d="M277 317l92 7 48 3" fill="none" stroke="#4b6a1e" strokeWidth="2" />
      <path d="M277 352l126 10 100 6h180" fill="none" stroke="#1f8418" strokeWidth="2" />
      <Screw x={422} y={324} />
      <Screw x={617} y={272} />
    </g>
    <path d={HULL} fill="none" stroke="#4f6450" strokeWidth="1.3" />
    <path d="M354 208h22 M614 207h30 M537 369h36 M600 368h54" stroke="#7d8184" strokeWidth="1.5" />
    {callouts.map((c) => <Callout key={c.text} {...c} />)}

    <g fontFamily="Liberation Sans, sans-serif" fontSize="12" strokeWidth="3">
      <path d="M60 406V388" stroke="#1010f0" />
      <path d="M60 378l5 10H56z" fill="#1010f0" />
      <path d="M60 405l-12 2" stroke="#e01a10" />
      <path d="M40 407l9-5 2 9z" fill="#e01a10" />
      <path d="M61 405l12 2" stroke="#08b818" />
      <path d="M80 408l-9-5-1 9z" fill="#08b818" />
      <text x="64" y="373" fill="#1c1ce0">Z</text>
      <text x="30" y="414" fill="#f02020">X</text>
      <text x="82" y="415" fill="#10c820">Y</text>
    </g>
  </ModelSvg>
);

const steps = [
  ['1.000', '#ff1e00'],
  ['0.800', '#ff8800'],
  ['0.600', '#fff000'],
  ['0.400', '#80e60c'],
  ['0.200', '#06da1c'],
  ['0.000', '#00e8fc'],
  ['-0.200', '#0094fa'],
  ['-0.400', '#0058fc'],
  ['-0.600', '#1c14f0'],
  ['-0.800', '#8a22fa'],
];

const columns = ['名义值', '测量值', '公差', '偏差'];

const LockGlyph = () => (
  <svg width="8" height="10" viewBox="0 0 8 10">
    <path d="M2 5V3c0-3 4-3 4 0v2" fill="none" stroke="#111" />
    <path d="M1 4h6v5H1z" fill="#111" />
  </svg>
);

const DownGlyph = () => (
  <svg width="8" height="5" viewBox="0 0 8 5"><path d="M0 0h8L4 4z" fill="#111" /></svg>
);

const CrossGlyph = ({ size = 8 }) => (
  <svg width={size} height={size} viewBox="0 0 8 8">
    <path d="M0 0l8 8M8 0L0 8" stroke="#222" strokeWidth={size > 8 ? 0.9 : 1.5} />
  </svg>
);

const Tools = ({ names, more = [], active, loose, vertical }) => (
  <Group $loose={loose} $vertical={vertical}>
    {names.map((name) => (
      <Tool key={name} aria-label={name} $more={more.includes(name)} $active={name === active}>
        <Icon name={name} />
      </Tool>
    ))}
  </Group>
);

const App = () => (
  <Shell>
    <GlobalStyle />
    <TitleBar>
      <WindowButton aria-label="最小化">
        <svg width="9" height="9" viewBox="0 0 9 9"><path d="M0 4.5h9" stroke="#333" /></svg>
      </WindowButton>
      <WindowButton aria-label="还原">
        <svg width="10" height="10" viewBox="0 0 10 10">
          <path d="M0.5 2.5h7v7h-7z M2.5 2.5v-2h7v7h-2" fill="none" stroke="#333" />
        </svg>
      </WindowButton>
      <WindowButton aria-label="关闭窗口"><CrossGlyph size={9} /></WindowButton>
    </TitleBar>

    <MenuBar>
      <MenuButton>窗口</MenuButton>
      <MenuButton>帮助</MenuButton>
      <Search>
        <SearchInput type="text" placeholder="搜索" aria-label="搜索" />
        <svg width="14" height="14" viewBox="0 0 14 14">
          <circle cx="9" cy="5" r="3.5" fill="none" stroke="#7385a8" strokeWidth="2" />
          <path d="M6 8l-4 4" stroke="#66789c" strokeWidth="3" strokeLinecap="round" />
        </svg>
      </Search>
    </MenuBar>

    <ToolRow $indent={3}>
      <Divider />
      <Tools names={['cubes', 'axes']} more={['cubes']} />
      <Caret aria-label="坐标系选项" />
      <Divider />
      <Tools names={['hueCube', 'measure']} more={['hueCube']} />
      <Caret aria-label="测量选项" />
      <Tools
        names={['petals', 'pointer', 'caliper', 'zoomText', 'window']}
        more={['petals', 'pointer', 'caliper', 'zoomText']}
        active="window"
      />
      <Divider />
      <Tools names={['cloud', 'probe', 'scanner', 'compass']} more={['probe', 'scanner', 'compass']} loose />
      <Divider />
      <Tools names={['clipboard', 'addShot', 'grid', 'camera']} />
      <DottedDivider />
      <Tools names={['docPart']} />
      <Caret aria-label="报告选项" />
      <Tools names={['play']} />
      <Caret aria-label="运行选项" />
      <Tools names={['stop', 'runList']} />
      <Divider />
      <Tools names={['chart']} />
      <Caret aria-label="图表选项" />
    </ToolRow>
    <ToolRow $indent={4}>
      <Tools names={['cylinder', 'cone', 'sphere', 'surface', 'planes']} />
      <Tools names={['polyline', 'cylinders', 'distance', 'angle']} loose />
      <Divider />
      <Tools names={['addPoint', 'meshRuler', 'wrenchCircle']} loose />
    </ToolRow>

    <Main>
      <LeftPane>
        <LeftTitle>
          <svg width="10" height="18" viewBox="0 0 10 18"><path d="M-3 5l7 8M4 5l-7 8" stroke="#222" strokeWidth="1.5" /></svg>
        </LeftTitle>
        <LeftBody>
          <svg width="10" height="46" viewBox="0 0 10 46">
            <path d="M-4 15l4-2 4 3v4l-4 2-4-2z" fill={STEEL} stroke={DARK} />
            <path d="M0 28.5h9" stroke="#ccc" />
            <path d="M-2 39l3-3 4 4" fill="none" stroke="#444" strokeWidth="1.5" />
          </svg>
          <ScrollTrack><ScrollThumb /></ScrollTrack>
          <svg width="10" height="12" viewBox="0 0 10 12"><path d="M-2 1l3 3 4-4" fill="none" stroke="#444" strokeWidth="1.5" /></svg>
        </LeftBody>
      </LeftPane>
      <Gutter />

      <Centre>
        <Scene>
          <PaneTitle $active>
            3D场景
            <PaneActions>
              <PaneAction aria-label="锁定"><LockGlyph /></PaneAction>
              <PaneAction aria-label="菜单"><DownGlyph /></PaneAction>
            </PaneActions>
          </PaneTitle>
          <SceneHeader>
            <Icon name="note" size={20} />
            <SceneTitle>定位注释</SceneTitle>
            <IconButton aria-label="信息"><Icon name="info" /></IconButton>
            <IconButton aria-label="旋转"><Icon name="orbit" /></IconButton>
            <CloseButton>关闭</CloseButton>
          </SceneHeader>
          <Viewport>
            <Model />
            <Legend>
              {steps.map(([label, color], i) => (
                <LegendStep key={label}>
                  <LegendLabel>{label}</LegendLabel>
                  <LegendSwatch $color={color} $dashed={i > 0 && i !== 5} />
                </LegendStep>
              ))}
              <LegendStep>
                <LegendLabel>-1.000</LegendLabel>
                <svg width="11" height="1"><path d="M0 0.5h11" stroke="#444" /></svg>
              </LegendStep>
            </Legend>
            <FloatBar>
              <Tools names={['noteTray']} />
              <Caret aria-label="注释选项" />
              <Tools names={['gear']} more={['gear']} />
              <Divider />
              <Tools names={['unlock']} />
              <Caret aria-label="锁定选项" />
              <Tools names={['eye']} />
            </FloatBar>
            <Spotlight />
            <Cursor width="13" height="17" viewBox="0 0 13 17">
              <path d="M2 1v13l3-3 3 5 2-1-2-5h4z" fill="#fff" stroke="#555" />
            </Cursor>
          </Viewport>
          <Tabs role="tablist">
            <Tab role="tab" aria-selected="true" $active>3D场景</Tab>
            <Tab role="tab" aria-selected="false">报告编辑器</Tab>
          </Tabs>
        </Scene>

        <Dock>
          <PaneTitle>
            几何控制
            <PaneActions>
              <PaneAction aria-label="锁定"><LockGlyph /></PaneAction>
              <PaneAction aria-label="菜单"><DownGlyph /></PaneAction>
              <PaneAction aria-label="关闭面板"><CrossGlyph /></PaneAction>
            </PaneActions>
          </PaneTitle>
          <DockBody>
            <TablePane>
              <DataTable>
                <thead>
                  <tr>
                    <HeadCell $width="18px" />
                    <HeadCell $align="left">控制</HeadCell>
                    {columns.map((name) => <HeadCell key={name} $width="139px">{name}</HeadCell>)}
                    <HeadCell $width="139px" $align="center">测试</HeadCell>
                  </tr>
                </thead>
                <tbody>
                  <tr><EmptyCell colSpan={7}>此视图中没有项目可显示。</EmptyCell></tr>
                </tbody>
              </DataTable>
            </TablePane>
            <DockTools>
              <DockPair>
                <DockTool aria-label="检查"><Icon name="checkRange" size={14} /></DockTool>
                <DockTool disabled aria-label="目标"><Icon name="target" size={14} /></DockTool>
              </DockPair>
              <DockPair>
                <DockTool disabled aria-label="编辑"><Icon name="wrench" size={14} /></DockTool>
                <DockTool disabled aria-label="删除"><Icon name="cross" size={14} /></DockTool>
              </DockPair>
              <DockPair>
                <DockTool disabled aria-label="标记"><Icon name="flag" size={14} /></DockTool>
                <DockTool disabled aria-label="导出"><Icon name="export" size={14} /></DockTool>
              </DockPair>
            </DockTools>
          </DockBody>
        </Dock>
      </Centre>

      <SideBar>
        <SideDots />
        <Tools vertical names={['viewModes', 'alignBox', 'project', 'zoomFit']} more={['viewModes', 'alignBox']} />
        <Tools vertical loose names={['zoomHand', 'eye', 'wireBox', 'monitor']} more={['eye', 'wireBox', 'monitor']} />
        <SideDivider />
        <Group $vertical $loose>
          <Tool $active aria-label="色图"><Icon name="cubeBar" /></Tool>
          <Split>
            <Tool aria-label="注释色标"><Icon name="noteBar" /></Tool>
            <SideCaret aria-label="注释色标选项" />
          </Split>
          <Tool aria-label="色标设置"><Icon name="wrenchBar" /></Tool>
        </Group>
        <SideDivider />
        <Tools vertical names={['noteMove']} active="noteMove" />
        <SideDots $gap />
        <Split>
          <Tool aria-label="选择"><Icon name="hand" /></Tool>
          <SideCaret aria-label="选择选项" />
        </Split>
        <SideDivider />
        <Tools vertical loose names={['windowShape', 'addShape', 'flip']} more={['addShape', 'flip']} />
      </SideBar>
    </Main>

    <FootBar>
      <Divider />
      <Tools names={['robot']} />
    </FootBar>
    <StatusBar>
      <StatusItem>层 1</StatusItem>
      <StatusItem>毫米</StatusItem>
      <StatusItem aria-label="点">
        <svg width="14" height="14" viewBox="0 0 14 14">
          <g fill={DARK}><circle cx="4" cy="2" r="2" /><circle cx="4" cy="8" r="2" /><circle cx="10" cy="7" r="2" /></g>
        </svg>
      </StatusItem>
      <StatusItem aria-label="刷新">
        <svg width="16" height="14" viewBox="0 0 16 14">
          <path d="M2 8c0-8 12-8 12 0M15 4v5h-5" fill="none" stroke={DARK} strokeWidth="2" />
        </svg>
      </StatusItem>
    </StatusBar>
  </Shell>
);

export default App;
